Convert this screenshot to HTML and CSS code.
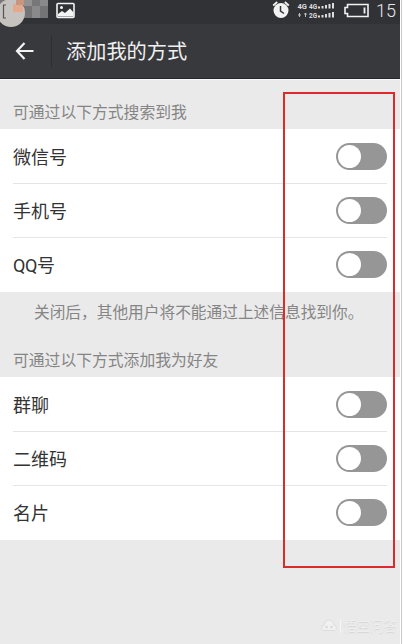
FILE: index.html
```
<!DOCTYPE html>
<html lang="zh-CN">
<head>
<meta charset="utf-8">
<title>添加我的方式</title>
<link rel="stylesheet" href="styles.css">
</head>
<body>
<div class="screen">
  <div class="status">
    <svg class="status-left" width="80" height="28" viewBox="0 0 80 28">
      <rect x="0" y="0" width="48" height="18" fill="#77777a"/>
      <rect x="24" y="0" width="8" height="6" fill="#929294"/><rect x="32" y="0" width="8" height="6" fill="#77777a"/>
      <rect x="24" y="6" width="8" height="12" fill="#747477"/><rect x="32" y="6" width="8" height="12" fill="#8a8a8c"/>
      <rect x="40" y="0" width="8" height="6" fill="#8a8a8c"/><rect x="40" y="6" width="8" height="12" fill="#747477"/>
      <circle cx="11" cy="13" r="14" fill="#c5c2c0"/>
      <path d="M6 5H3.500v13H6" fill="none" stroke="#555" stroke-width="1.200"/>
      <rect x="13" y="4" width="10" height="8" fill="#e3a98d"/><rect x="16" y="0" width="8" height="5" fill="#c9957e"/>
      <rect x="57" y="3.500" width="17" height="14" rx="1" fill="none" stroke="#f4f4f4" stroke-width="1.600"/>
      <path d="M58 16.500v-2.500l4-3 3 2 5-4.500 3.500 4v4z" fill="#f4f4f4"/><circle cx="61.500" cy="7.500" r="1.500" fill="#f4f4f4"/>
    </svg>
    <svg class="status-right" width="98" height="24" viewBox="0 0 98 24">
      <circle cx="9" cy="10.500" r="7.500" fill="#f2f2f2"/>
      <path d="M1.200 5.500l4-3.500M16.800 5.500l-4-3.500" stroke="#f2f2f2" stroke-width="1.800"/>
      <path d="M8.500 6v5l3.500 2.500" fill="none" stroke="#333539" stroke-width="1.500"/>
      <g class="tiny"><text x="25.500" y="8.500" class="main-net">4G</text><text x="37" y="8.500">4G</text><text x="37" y="17.500">2G</text></g>
      <path d="M26 15h3M27.500 13v4M32 14h3M33.500 13v4" stroke="#bbb" stroke-width="1"/>
      <g fill="#ddd">
        <rect x="46" y="6.500" width="2" height="2"/><rect x="49.500" y="6" width="2" height="2.500"/><rect x="53" y="5" width="2" height="3.500"/><rect x="56.500" y="4" width="2" height="4.500"/><rect x="60" y="3" width="2" height="5.500"/>
        <rect x="46" y="15.500" width="2" height="2"/><rect x="49.500" y="15" width="2" height="2.500"/><rect x="53" y="14" width="2" height="3.500"/><rect x="56.500" y="13" width="2" height="4.500"/><rect x="60" y="12" width="2" height="5.500"/>
      </g>
      <path d="M75.500 4.500h20.500v12h-20.500v-3h-2.500v-6h2.500z" fill="none" stroke="#f2f2f2" stroke-width="1.600"/>
      <path d="M92.500 7.500v6" stroke="#f2f2f2" stroke-width="1.800"/>
    </svg>
    <span class="time">15</span>
  </div>
  <header class="bar">
    <svg class="back" width="20" height="18" viewBox="0 0 20 18"><path d="M9.500 1L2 9l7.500 8M2 9h16.500" fill="none" stroke="#f3f3f3" stroke-width="2.200"/></svg>
    <span class="sep"></span>
    <h1>添加我的方式</h1>
  </header>
  <main>
    <h2 class="first">可通过以下方式搜索到我</h2>
    <ul>
      <li><div>微信号<i class="switch"></i></div></li>
      <li><div>手机号<i class="switch"></i></div></li>
      <li><div><span><span class="latin">QQ</span>号</span><i class="switch"></i></div></li>
    </ul>
    <p>关闭后，其他用户将不能通过上述信息找到你。</p>
    <h2>可通过以下方式添加我为好友</h2>
    <ul>
      <li><div>群聊<i class="switch"></i></div></li>
      <li><div>二维码<i class="switch"></i></div></li>
      <li><div>名片<i class="switch"></i></div></li>
    </ul>
  </main>
  <div class="marker"></div>
  <div class="watermark">
    <svg width="16" height="14" viewBox="0 0 16 14"><path d="M3 6a5 5 0 0 1 10 0a3 3 0 0 1 1 5.500H2A3 3 0 0 1 3 6z" fill="#f1f1f1" stroke="#dcdcdc"/><circle cx="5.500" cy="8" r="1.500" fill="#ddd"/><circle cx="10.500" cy="8" r="1.500" fill="#ddd"/></svg>
    <span>悟空问答</span>
  </div>
</div>
</body>
</html>
```
FILE: styles.css
```
* { box-sizing: border-box; margin: 0; padding: 0; }
body {
  width: 403px; height: 644px; overflow: hidden; background: #fff;
  font-family: Roboto, "Noto Sans CJK SC", sans-serif;
}
.screen { position: relative; width: 402px; height: 644px; border-right: 1px solid #c8c8c8; padding-right: 1px; background: #fff; }
.status { display: flex; height: 24px; background: #313235; color: #e8e8e8; }
.status-left { position: relative; z-index: 1; overflow: visible; }
.status-right { margin-left: 192px; }
.time { margin-left: 6px; font-size: 18px; font-weight: 300; line-height: 22px; }
.tiny { font: bold 6.500px Roboto, sans-serif; fill: #ddd; }
.main-net { font-size: 7.500px; }
.bar { display: flex; align-items: center; height: 55px; padding-left: 15px; background: #38393d; border-bottom: 1px solid #252629; color: #f0f0f0; }
.sep { width: 1px; height: 32px; margin: 0 14px 0 16px; background: #2d2e32; }
h1 { font-size: 20.200px; font-weight: 400; line-height: 30px; padding-top: 2px; }
main { height: 565px; background: #eaeaea; border-top: 1px solid #f8f8f8; }
h2, p { font-size: 15.800px; font-weight: 400; color: #858585; }
h2 { height: 45px; padding-left: 13px; line-height: 26px; }
.first { height: 49px; padding-top: 20px; }
h2:not(.first) { padding-top: 16px; }
p { height: 40px; padding-left: 34px; font-size: 15.700px; line-height: 41px; }
ul { list-style: none; background: #fff; padding-left: 13px; }
li { height: 54px; padding-right: 13px; }
li div { display: flex; align-items: center; justify-content: space-between; height: 55px; border-bottom: 1px solid #e5e5e5; font-size: 18px; color: #333; }
li:last-child { height: 55px; }
li:last-child div { border: 0; padding-bottom: 1px; }
.latin { letter-spacing: -0.4px; }
.switch { width: 51px; height: 27px; border-radius: 14px; background: #969696; padding: 2px; }
.switch::before { content: ""; display: block; width: 23px; height: 23px; border-radius: 50%; background: #fff; }
.marker { position: absolute; left: 283px; top: 92px; width: 112px; height: 476px; border: 2px solid #db2b2b; }
.watermark { position: absolute; left: 321px; top: 619px; display: flex; align-items: center; gap: 3px; color: #efefef; font-size: 13.500px; line-height: 20px; text-shadow: 0 1px 1px #d4d4d4; }
.watermark span { border-left: 1px solid #f5f5f5; padding-left: 2px; line-height: 14px; }
```
